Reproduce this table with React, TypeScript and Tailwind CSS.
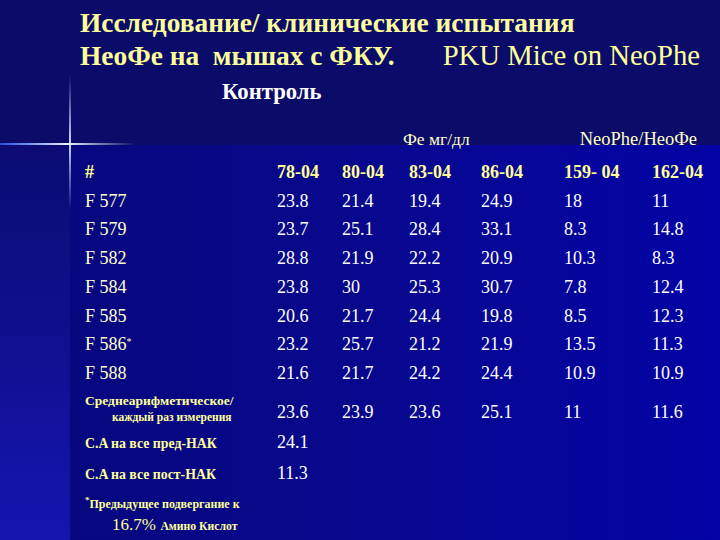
import React from "react";

const cols = "grid grid-cols-[192px_65px_67px_72px_83px_88px_1fr]";

const rows: [string, string[]][] = [
  ["F 577", ["23.8", "21.4", "19.4", "24.9", "18", "11"]],
  ["F 579", ["23.7", "25.1", "28.4", "33.1", "8.3", "14.8"]],
  ["F 582", ["28.8", "21.9", "22.2", "20.9", "10.3", "8.3"]],
  ["F 584", ["23.8", "30", "25.3", "30.7", "7.8", "12.4"]],
  ["F 585", ["20.6", "21.7", "24.4", "19.8", "8.5", "12.3"]],
  ["F 586*", ["23.2", "25.7", "21.2", "21.9", "13.5", "11.3"]],
  ["F 588", ["21.6", "21.7", "24.2", "24.4", "10.9", "10.9"]],
];

const heads = ["78-04", "80-04", "83-04", "86-04", "159- 04", "162-04"];
const means = ["23.6", "23.9", "23.6", "25.1", "11", "11.6"];

export default function App() {
  return (
    <div className="relative w-[720px] h-[540px] overflow-hidden bg-[#0b0b69] font-['Liberation_Serif','Times_New_Roman',serif]">
      {/* background layers */}
      <div className="absolute left-0 right-0 top-[145px] bottom-0 bg-gradient-to-r from-[#07077c] via-[#08088e] to-[#0303a6]" />
      <div className="absolute left-0 top-[145px] bottom-0 w-[70px] bg-gradient-to-b from-[#0b0b72] to-[#1515b0]" />
      <div className="absolute left-[69px] top-[75px] w-[2px] h-[135px] bg-gradient-to-b from-transparent via-[#c8d8ff] to-transparent" />
      <div className="absolute left-0 top-[143px] w-[135px] h-[2px] bg-gradient-to-r from-[#2a4ad8] via-[#e8f0ff] to-transparent" />

      <div className="relative flex flex-col">
        {/* Title */}
        <div className="pt-[7px] pl-[80px] pr-[20px] text-[#ffff99] leading-[32px]">
          <div className="font-bold text-[27.4px] whitespace-pre">Исследование/ клиническиe испытания</div>
          <div className="flex justify-between items-baseline">
            <span className="font-bold text-[27.4px] whitespace-pre">НеоФе на  мышах с ФКУ.</span>
            <span className="font-normal text-[28.7px]">PKU Mice on NeoPhe</span>
          </div>
        </div>
        <div className="h-[34px] pt-[6px] pl-[222px] text-white font-bold text-[22.7px] leading-[28px]">
          Контроль
        </div>
        <div className="mt-[23px] h-[20px] flex items-baseline leading-[20px] text-[#ffffcc]">
          <span className="ml-[403px] text-[17.5px]">Фе мг/дл</span>
          <span className="ml-[110px] text-[18.5px]">NeoPhe/НеоФе</span>
        </div>

        {/* Table */}
        <div className="mt-[9px] pl-[85px] text-[18px] leading-[28.7px]">
          <div className={`${cols} font-bold text-[#ffff99]`}>
            <span>#</span>
            {heads.map((h) => (
              <span key={h} className="whitespace-pre">{h}</span>
            ))}
          </div>
          {rows.map(([label, vals]) => (
            <div key={label} className={cols}>
              <span className="text-[#ffffcc]">
                {label.replace("*", "")}
                {label.includes("*") && <sup className="text-[10px]">*</sup>}
              </span>
              {vals.map((v, i) => (
                <span key={i} className="text-white">{v}</span>
              ))}
            </div>
          ))}
          <div className={`${cols} h-[40.5px]`}>
            <div className="pt-[4px] font-bold text-[#ffff99]">
              <div className="text-[13.5px] leading-[18px] whitespace-nowrap">Среднеарифметическое/</div>
              <div className="text-[11.5px] leading-[15px] pl-[27px] whitespace-nowrap">каждый раз измерения</div>
            </div>
            {means.map((v, i) => (
              <span key={i} className="pt-[10px] text-white">{v}</span>
            ))}
          </div>
          <div className={`${cols} items-baseline`}>
            <span className="text-[13.8px] font-bold text-[#ffff99] whitespace-nowrap">C.A на все пред-НАК</span>
            <span className="text-white">24.1</span>
          </div>
          <div className={`${cols} items-baseline`}>
            <span className="text-[13.8px] font-bold text-[#ffff99] whitespace-nowrap">C.A на все пост-НАК</span>
            <span className="text-white">11.3</span>
          </div>
          <div className="text-[#ffff99] font-bold">
            <div className="text-[12px] leading-[17px] pt-[6px] whitespace-nowrap">
              <sup className="text-[9px]">*</sup>Предыдущее подвергание к
            </div>
            <div className="pl-[27px] leading-[22px] whitespace-nowrap">
              <span className="text-[17px] font-normal">16.7%</span>{" "}
              <span className="text-[11.7px]">Амино Кислот</span>
            </div>
          </div>
        </div>
      </div>
    </div>
  );
}
